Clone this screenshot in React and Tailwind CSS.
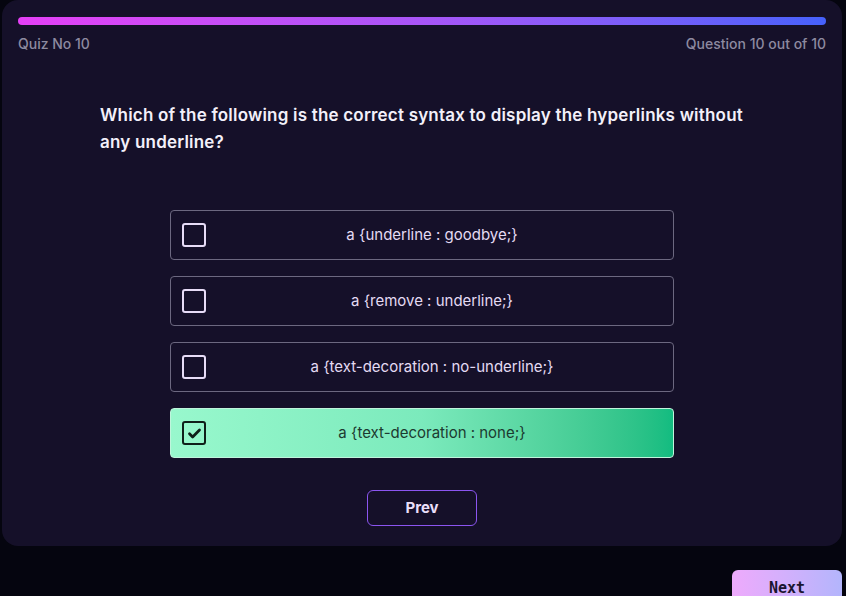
import React from 'react';

const options = [
  { text: 'a {underline : goodbye;}', correct: false },
  { text: 'a {remove : underline;}', correct: false },
  { text: 'a {text-decoration : no-underline;}', correct: false },
  { text: 'a {text-decoration : none;}', correct: true },
];

function Check({ checked }) {
  if (checked) {
    return (
      <div className="flex h-6 w-6 shrink-0 items-center justify-center rounded-[3px] border-[2.5px] border-[#0f1f19]">
        <svg width="15" height="15" viewBox="0 0 24 24" fill="none" stroke="#0f1f19" strokeWidth="4.5" strokeLinecap="round" strokeLinejoin="round">
          <path d="M4 12.5l5 5L20 6.5" />
        </svg>
      </div>
    );
  }
  return <div className="h-6 w-6 shrink-0 rounded-[3px] border-2 border-[#e7dcf7]" />;
}

export default function App() {
  return (
    <div className="h-[596px] w-[846px] overflow-hidden bg-[#05050f] font-['Inter',sans-serif]">
      <div className="ml-[2px] flex h-[546px] w-[840px] flex-col rounded-[16px] bg-[#151029] px-4 pt-[17px]">
        <div className="h-[8px] w-full rounded-full bg-gradient-to-r from-[#e43ff5] via-[#a855f7] to-[#4561fb]" />
        <div className="mt-[10px] flex justify-between text-[14px] leading-[18px] font-medium text-[#8d8aa0]">
          <span>Quiz No 10</span>
          <span>Question 10 out of 10</span>
        </div>

        <h2 className="ml-[82px] mt-[49px] w-[646px] text-[17px] font-semibold leading-[27px] tracking-[0.2px] text-[#f3f0fa]">
          Which of the following is the correct syntax to display the hyperlinks without any underline?
        </h2>

        <div className="ml-[152px] mt-[54px] flex w-[504px] flex-col gap-4">
          {options.map((o) => (
            <div
              key={o.text}
              className={
                o.correct
                  ? 'flex h-[50px] items-center rounded-[4px] border border-[#bff5dc] bg-gradient-to-r from-[#98f8cd] via-[#7beabc] to-[#12bc80] px-[11px]'
                  : 'flex h-[50px] items-center rounded-[4px] border border-[#6c6880] px-[11px]'
              }
            >
              <Check checked={o.correct} />
              <span
                className={
                  o.correct
                    ? 'flex-1 pr-[4px] text-center text-[15px] text-[#1c3a30]'
                    : 'flex-1 pr-[4px] text-center text-[15px] text-[#e4dbf3]'
                }
              >
                {o.text}
              </span>
            </div>
          ))}
        </div>

        <div className="mt-8 flex justify-center">
          <button className="h-[36px] w-[110px] rounded-[6px] border border-[#8b55f0] text-[15px] font-bold text-[#eadff9]">
            Prev
          </button>
        </div>
      </div>

      <div className="mt-[24px] flex justify-end pr-[4px]">
        <button className="h-[36px] w-[110px] rounded-[6px] bg-gradient-to-r from-[#eeaafc] to-[#b3b5fc] font-['DejaVu_Sans_Mono',monospace] text-[15px] font-bold text-[#1a1530]">
          Next
        </button>
      </div>
    </div>
  );
}
